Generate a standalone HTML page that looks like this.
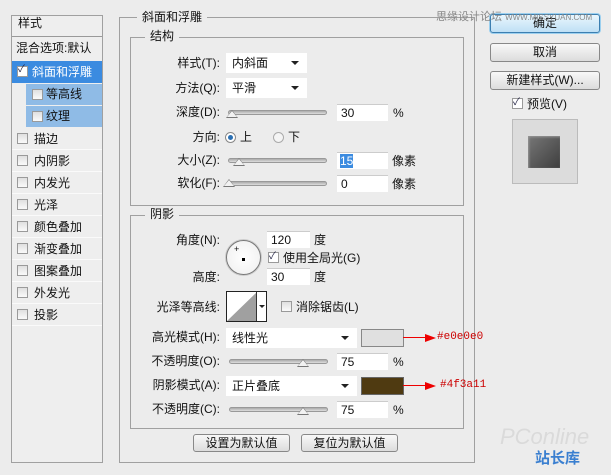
<!DOCTYPE html><html><head><meta charset="utf-8"><style>
*{margin:0;padding:0;box-sizing:border-box}
body{width:611px;height:475px;background:#ececec;position:relative;overflow:hidden;font-family:"Liberation Sans","Noto Sans CJK SC",sans-serif;font-size:12px;color:#111}
div,span{position:absolute}
.t{line-height:14px;white-space:nowrap}
.r{text-align:right}
.box{border:1px solid #a0a0a0}
.cb{width:11px;height:11px;border:1px solid #9a9a9a;background:linear-gradient(#e0e0e0,#fafafa)}
.row{left:12px;width:90px;height:22px;border-bottom:1px solid #fafafa}
.row .cb{left:5px;top:5px}
.row .t{left:22px;top:4px}
.dd{background:#fff;height:20px}
.dd .t{left:6px;top:3px}
.dd .a{right:8px;top:8px;width:0;height:0;border-left:4px solid transparent;border-right:4px solid transparent;border-top:4px solid #222}
.in{background:#fff;height:17px;border-top:1px solid #ccc}
.in .t{left:4px;top:1px}
.sl{height:5px;border:1px solid #999;border-radius:3px;background:linear-gradient(#aaa,#ddd)}
.th{width:0;height:0;border-left:6px solid transparent;border-right:6px solid transparent;border-bottom:8px solid #777}
.th:after{content:"";position:absolute;left:-5px;top:1px;border-left:5px solid transparent;border-right:5px solid transparent;border-bottom:6px solid #f2f2f2}
.btn{border:1px solid #888;border-radius:3px;background:linear-gradient(#f8f8f8,#dcdcdc);text-align:center;line-height:16px}
.leg{background:#ececec;padding:0 5px}
</style></head><body>
<!-- left list -->
<div class="box" style="left:11px;top:15px;width:92px;height:448px;background:#eeeeee"></div>
<div class="t" style="left:18px;top:16px">样式</div>
<div style="left:12px;top:36px;width:90px;height:1px;background:#999"></div>
<div class="t" style="left:16px;top:41px">混合选项:默认</div>
<div style="left:12px;top:61px;width:90px;height:22px;background:#3b8be0"></div>
<div class="cb" style="left:17px;top:66px;background:#fff"></div><div class="t" style="left:18px;top:63px;font-size:10px;color:#224">✓</div>
<div class="t" style="left:32px;top:65px;color:#fff">斜面和浮雕</div>
<div style="left:26px;top:84px;width:76px;height:21px;background:#8fbbe6"></div>
<div style="left:26px;top:106px;width:76px;height:21px;background:#8fbbe6"></div>
<div class="cb" style="left:32px;top:89px"></div><div class="t" style="left:46px;top:87px">等高线</div>
<div class="cb" style="left:32px;top:111px"></div><div class="t" style="left:46px;top:109px">纹理</div>
<div class="row" style="top:128px"><div class="cb"></div><div class="t">描边</div></div>
<div class="row" style="top:150px"><div class="cb"></div><div class="t">内阴影</div></div>
<div class="row" style="top:172px"><div class="cb"></div><div class="t">内发光</div></div>
<div class="row" style="top:194px"><div class="cb"></div><div class="t">光泽</div></div>
<div class="row" style="top:216px"><div class="cb"></div><div class="t">颜色叠加</div></div>
<div class="row" style="top:238px"><div class="cb"></div><div class="t">渐变叠加</div></div>
<div class="row" style="top:260px"><div class="cb"></div><div class="t">图案叠加</div></div>
<div class="row" style="top:282px"><div class="cb"></div><div class="t">外发光</div></div>
<div class="row" style="top:304px"><div class="cb"></div><div class="t">投影</div></div>

<!-- main -->
<div class="box" style="left:119px;top:17px;width:356px;height:446px"></div>
<div class="t leg" style="left:137px;top:10px">斜面和浮雕</div>
<div class="box" style="left:130px;top:37px;width:334px;height:169px"></div>
<div class="t leg" style="left:145px;top:29px">结构</div>
<div class="t r" style="left:150px;top:56px;width:70px">样式(T):</div>
<div class="dd" style="left:226px;top:53px;width:81px"><div class="t">内斜面</div><div class="a"></div></div>
<div class="t r" style="left:150px;top:81px;width:70px">方法(Q):</div>
<div class="dd" style="left:226px;top:78px;width:81px"><div class="t">平滑</div><div class="a"></div></div>
<div class="t r" style="left:150px;top:105px;width:70px">深度(D):</div>
<div class="sl" style="left:228px;top:110px;width:99px"></div><div class="th" style="left:226px;top:110px"></div>
<div class="in" style="left:337px;top:104px;width:51px"><div class="t">30</div></div><div class="t" style="left:393px;top:106px">%</div>
<div class="t r" style="left:150px;top:130px;width:70px">方向:</div>
<div style="left:225px;top:132px;width:11px;height:11px;border-radius:50%;border:1px solid #888;background:#fff"></div><div style="left:228px;top:135px;width:5px;height:5px;border-radius:50%;background:#2a6fb3"></div>
<div class="t" style="left:240px;top:130px">上</div>
<div style="left:273px;top:132px;width:11px;height:11px;border-radius:50%;border:1px solid #aaa;background:#f4f4f4"></div>
<div class="t" style="left:288px;top:130px">下</div>
<div class="t r" style="left:150px;top:153px;width:70px">大小(Z):</div>
<div class="sl" style="left:228px;top:158px;width:99px"></div><div class="th" style="left:233px;top:158px"></div>
<div class="in" style="left:337px;top:152px;width:51px"><div class="t" style="background:#3b8be0;color:#fff;left:3px">15</div></div><div class="t" style="left:392px;top:154px">像素</div>
<div class="t r" style="left:150px;top:176px;width:70px">软化(F):</div>
<div class="sl" style="left:228px;top:181px;width:99px"></div><div class="th" style="left:223px;top:179px"></div>
<div class="in" style="left:337px;top:175px;width:51px"><div class="t">0</div></div><div class="t" style="left:392px;top:177px">像素</div>

<div class="box" style="left:130px;top:215px;width:334px;height:214px"></div>
<div class="t leg" style="left:145px;top:207px">阴影</div>
<div class="t r" style="left:140px;top:233px;width:80px">角度(N):</div>
<div style="left:226px;top:240px;width:35px;height:35px;border-radius:50%;border:1px solid #777;background:radial-gradient(#fff,#eee);box-shadow:0 0 0 1px #ccc"></div>
<div style="left:242px;top:258px;width:3px;height:3px;background:#000"></div>
<div class="t" style="left:234px;top:242px;font-size:9px">+</div>
<div class="in" style="left:267px;top:231px;width:43px"><div class="t">120</div></div><div class="t" style="left:314px;top:233px">度</div>
<div class="cb" style="left:268px;top:252px;background:#fff"></div><div class="t" style="left:269px;top:250px;font-size:10px;color:#224">✓</div>
<div class="t" style="left:283px;top:251px">使用全局光(G)</div>
<div class="t r" style="left:140px;top:270px;width:80px">高度:</div>
<div class="in" style="left:267px;top:268px;width:43px"><div class="t">30</div></div><div class="t" style="left:314px;top:270px">度</div>
<div class="t r" style="left:140px;top:300px;width:80px">光泽等高线:</div>
<div style="left:226px;top:291px;width:41px;height:31px;border:1px solid #222;background:#fff"></div>
<svg style="position:absolute;left:227px;top:292px" width="30" height="29"><polygon points="0,29 30,0 30,29" fill="#a0a0a0"/></svg>
<div style="left:256px;top:292px;width:1px;height:29px;background:#333"></div>
<div style="left:259px;top:305px;border-left:3px solid transparent;border-right:3px solid transparent;border-top:3px solid #222;width:0;height:0"></div>
<div class="cb" style="left:281px;top:301px"></div><div class="t" style="left:296px;top:300px">消除锯齿(L)</div>
<div class="t r" style="left:140px;top:330px;width:80px">高光模式(H):</div>
<div class="dd" style="left:226px;top:328px;width:131px"><div class="t">线性光</div><div class="a"></div></div>
<div style="left:361px;top:329px;width:43px;height:18px;border:1px solid #888;background:#e0e0e0"></div>
<div style="left:403px;top:337px;width:24px;height:1px;background:#e00"></div><div style="left:425px;top:334px;border-top:4px solid transparent;border-bottom:4px solid transparent;border-left:11px solid #e00;width:0;height:0"></div>
<div class="t" style="left:437px;top:330px;color:#c00;font-family:'Liberation Mono',monospace;font-size:11px">#e0e0e0</div>
<div class="t r" style="left:140px;top:354px;width:80px">不透明度(O):</div>
<div class="sl" style="left:229px;top:359px;width:99px"></div><div class="th" style="left:297px;top:359px"></div>
<div class="in" style="left:337px;top:353px;width:51px"><div class="t">75</div></div><div class="t" style="left:393px;top:355px">%</div>
<div class="t r" style="left:140px;top:378px;width:80px">阴影模式(A):</div>
<div class="dd" style="left:226px;top:376px;width:131px"><div class="t">正片叠底</div><div class="a"></div></div>
<div style="left:361px;top:377px;width:43px;height:18px;border:1px solid #666;background:#4f3a11"></div>
<div style="left:403px;top:385px;width:24px;height:1px;background:#e00"></div><div style="left:425px;top:382px;border-top:4px solid transparent;border-bottom:4px solid transparent;border-left:11px solid #e00;width:0;height:0"></div>
<div class="t" style="left:440px;top:378px;color:#c00;font-family:'Liberation Mono',monospace;font-size:11px">#4f3a11</div>
<div class="t r" style="left:140px;top:402px;width:80px">不透明度(C):</div>
<div class="sl" style="left:229px;top:407px;width:99px"></div><div class="th" style="left:297px;top:407px"></div>
<div class="in" style="left:337px;top:401px;width:51px"><div class="t">75</div></div><div class="t" style="left:393px;top:403px">%</div>
<div class="btn" style="left:193px;top:434px;width:97px;height:18px">设置为默认值</div>
<div class="btn" style="left:301px;top:434px;width:97px;height:18px">复位为默认值</div>

<!-- right -->
<div class="btn" style="left:490px;top:14px;width:110px;height:19px;border-color:#3c7fb1;background:linear-gradient(#eaf6fd,#bfe0f5);box-shadow:0 0 0 1px #9cd0ef">确定</div>
<div class="btn" style="left:490px;top:43px;width:110px;height:19px">取消</div>
<div class="btn" style="left:490px;top:71px;width:110px;height:19px">新建样式(W)...</div>
<div class="t" style="left:436px;top:10px;color:#888;font-size:11px;z-index:5">思缘设计论坛 <span style="position:static;font-size:8px">WWW.MISSYUAN.COM</span></div>
<div class="cb" style="left:512px;top:98px;background:#fff"></div><div class="t" style="left:513px;top:96px;font-size:10px;color:#224">✓</div>
<div class="t" style="left:527px;top:97px">预览(V)</div>
<div style="left:512px;top:119px;width:66px;height:65px;border:1px solid #bbb;background:#dcdcdc"></div>
<div style="left:528px;top:136px;width:32px;height:32px;background:linear-gradient(135deg,#777,#3e3e3e);box-shadow:inset 1px 1px 2px #999"></div>
<div class="t" style="left:500px;top:430px;font-size:22px;color:#dadada;font-style:italic">PConline</div>
<div class="t" style="left:535px;top:452px;font-size:15px;color:#3a7fd0;font-weight:bold">站长库</div>
</body></html>
